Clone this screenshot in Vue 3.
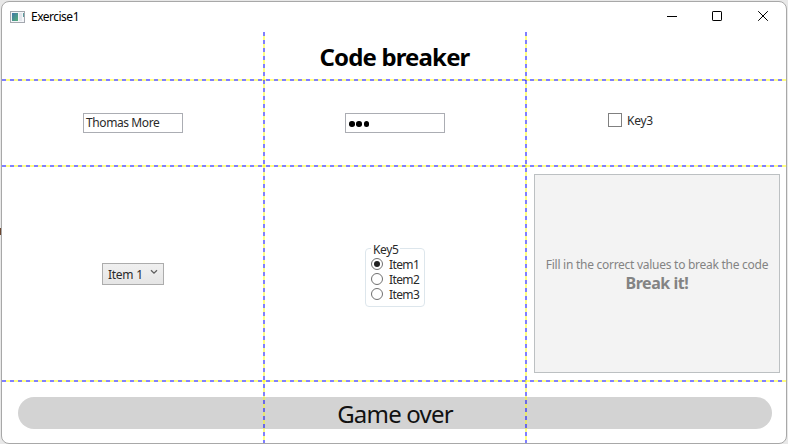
<script setup>
import { ref } from 'vue'

const name = ref('Thomas More')
const keyItems = ['Item1', 'Item2', 'Item3']
const selected = ref('Item1')
</script>

<template>
  <div class="desktop">
    <span class="sliver left"></span>
    <div class="window">
      <header class="titlebar">
        <svg class="app-icon" width="15" height="12" viewBox="0 0 15 12">
          <defs>
            <linearGradient id="pane" x1="0" y1="0" x2="1" y2="1">
              <stop offset="0" stop-color="#3f76a8" />
              <stop offset="1" stop-color="#55b078" />
            </linearGradient>
          </defs>
          <rect x="0.5" y="0.5" width="14" height="11" fill="#f4f6f9" stroke="#a3a7ae" />
          <rect x="2" y="2" width="6" height="8" fill="url(#pane)" />
          <rect x="9" y="2" width="3" height="8" fill="#e3e6ec" />
          <rect x="13" y="2" width="1" height="4" fill="#5b9a9c" />
        </svg>
        <span class="caption">Exercise1</span>
        <div class="controls">
          <svg width="10" height="10" viewBox="0 0 10 10"><path d="M0 5.5H10" /></svg>
          <svg width="10" height="10" viewBox="0 0 10 10"><rect x="0.5" y="0.5" width="9" height="9" rx="0.6" /></svg>
          <svg width="10" height="10" viewBox="0 0 10 10"><path d="M0.2 0.2L9.8 9.8M9.8 0.2L0.2 9.8" /></svg>
        </div>
      </header>

      <main class="grid">
        <h1 class="title"><span>Code breaker</span></h1>

        <div class="cell"><div class="textbox"><span>{{ name }}</span></div></div>
        <div class="cell">
          <div class="textbox password"><i></i><i></i><i></i></div>
        </div>
        <div class="cell key3">
          <span class="checkbox"></span><span class="key-label">Key3</span>
        </div>

        <div class="cell">
          <div class="combo">
            <span>Item 1</span>
            <svg width="8" height="6" viewBox="0 0 8 6"><path d="M1 1.2L4 4.2L7 1.2" /></svg>
          </div>
        </div>
        <div class="cell">
          <fieldset class="group">
            <legend>Key5</legend>
            <div v-for="item in keyItems" :key="item" class="option">
              <span class="radio" :class="{ on: item === selected }"></span>
              <span>{{ item }}</span>
            </div>
          </fieldset>
        </div>
        <div class="cell action">
          <div class="break-button">
            <span class="hint">Fill in the correct values to break the code</span>
            <strong>Break it!</strong>
          </div>
        </div>

        <div class="status"><div class="pill"><span>Game over</span></div></div>

        <span class="line h r1"></span>
        <span class="line h r2"></span>
        <span class="line h r3"></span>
        <span class="line v c1"></span>
        <span class="line v c2"></span>
      </main>
    </div>
  </div>
</template>

<style>
body {
  background: #e8e8e8;
}
</style>

<style scoped>
.desktop {
  position: relative;
  box-sizing: border-box;
  width: 788px;
  height: 444px;
  padding: 1px 1px 0;
  background: #e8e8e8;
  font-family: "Noto Sans", "Open Sans", sans-serif;
  font-size: 12px;
  letter-spacing: -0.27px;
  color: #2a2a2a;
  overflow: hidden;
}
.sliver {
  position: absolute;
  left: 0;
  top: 228px;
  width: 1px;
  height: 7px;
  background: #6b4630;
}
.window {
  box-sizing: border-box;
  width: 786px;
  height: 443px;
  border: 1px solid #a8a8a8;
  border-radius: 8px;
  background: #fff;
  overflow: hidden;
  display: flex;
  flex-direction: column;
}
.titlebar {
  height: 30px;
  flex: none;
  display: flex;
  align-items: center;
  padding-left: 8px;
  box-sizing: border-box;
}
.app-icon {
  display: block;
  margin-top: -1px;
}
.caption {
  margin-left: 6px;
  margin-top: -1px;
  font-size: 12px;
  letter-spacing: -0.5px;
  color: #000;
}
.controls {
  margin: -2px 18px 0 auto;
  display: flex;
  gap: 36px;
}
.controls svg {
  display: block;
  fill: none;
  stroke: #000;
  stroke-width: 1;
}
.controls svg:first-child {
  margin-right: -1px;
}
.grid {
  position: relative;
  flex: 1;
  display: grid;
  grid-template-columns: 262px 262px 1fr;
  grid-template-rows: 48px 86px 215px 1fr;
}
.title {
  grid-column: 1 / -1;
  margin: 0;
  padding: 2px 0 0 1px;
  display: flex;
  align-items: center;
  justify-content: center;
  font-size: 24px;
  line-height: 32px;
  letter-spacing: -0.85px;
  color: #000;
}
.cell {
  display: flex;
  align-items: center;
  justify-content: center;
}
.textbox {
  box-sizing: border-box;
  width: 100px;
  height: 20px;
  border: 1px solid #abadb3;
  padding-left: 2px;
  display: flex;
  align-items: center;
  line-height: 16px;
  letter-spacing: -0.4px;
}
.password {
  padding: 2px 0 0 3px;
  gap: 1.8px;
}
.password i {
  width: 5.6px;
  height: 5.6px;
  border-radius: 50%;
  background: #000;
}
.key3 {
  justify-content: flex-start;
  align-items: flex-start;
  padding: 33px 0 0 82px;
}
.checkbox {
  box-sizing: border-box;
  width: 14px;
  height: 14px;
  border: 1px solid #808080;
  background: #fff;
}
.key-label {
  margin-left: 5px;
  line-height: 16px;
}
.combo {
  box-sizing: border-box;
  width: 62px;
  height: 22px;
  border: 1px solid #acacac;
  background: linear-gradient(#f0f0f0, #e5e5e5);
  display: flex;
  align-items: center;
  justify-content: space-between;
  padding: 1px 5px 0 5px;
}
.combo svg {
  margin-top: -4px;
  fill: none;
  stroke: #606060;
  stroke-width: 1.3;
}
.group {
  box-sizing: border-box;
  width: 60px;
  height: 66px;
  margin: 0;
  padding: 0 0 0 5px;
  border: 1px solid #dde6ec;
  border-radius: 4px;
  letter-spacing: -0.6px;
}
.group legend {
  padding: 1px 2px 0;
  height: 16px;
  box-sizing: border-box;
  line-height: 16px;
  letter-spacing: -0.4px;
}
.option {
  display: flex;
  align-items: center;
  height: 15px;
  gap: 6px;
  line-height: 15px;
}
.radio {
  box-sizing: border-box;
  width: 12px;
  height: 12px;
  border: 1px solid #707070;
  border-radius: 50%;
  display: flex;
  align-items: center;
  justify-content: center;
}
.radio.on::after {
  content: "";
  width: 6px;
  height: 6px;
  border-radius: 50%;
  background: #212121;
}
.action {
  align-items: stretch;
  padding: 8px 6px 8px 8px;
}
.break-button {
  box-sizing: border-box;
  flex: 1;
  border: 1px solid #bcc0c2;
  background: #f3f3f3;
  color: #838383;
  display: flex;
  flex-direction: column;
  align-items: center;
  justify-content: center;
  padding-top: 3px;
}
.hint {
  line-height: 16px;
  white-space: nowrap;
}
.break-button strong {
  font-size: 16px;
  line-height: 21px;
  letter-spacing: -0.45px;
}
.status {
  grid-column: 1 / -1;
  padding: 16px 14px 0 16px;
}
.pill {
  box-sizing: border-box;
  height: 32px;
  padding-top: 2px;
  border-radius: 16px;
  background: #d3d3d3;
  display: flex;
  align-items: center;
  justify-content: center;
  font-size: 24px;
  line-height: 32px;
  letter-spacing: -0.8px;
  color: #111;
}
.line {
  position: absolute;
  --a: rgba(0, 0, 255, 0.5);
  --b: rgba(255, 255, 0, 0.5);
}
.h {
  left: 0;
  right: 0;
  height: 2px;
  background: repeating-linear-gradient(90deg, var(--a) 0 4px, var(--b) 4px 8px);
}
.v {
  top: 0;
  bottom: 0;
  width: 2px;
  background: repeating-linear-gradient(180deg, var(--a) 0 4px, var(--b) 4px 8px);
}
.r1 { top: 47px; }
.r2 { top: 133px; }
.r3 { top: 348px; }
.c1 { left: 261px; }
.c2 { left: 523px; }
</style>
